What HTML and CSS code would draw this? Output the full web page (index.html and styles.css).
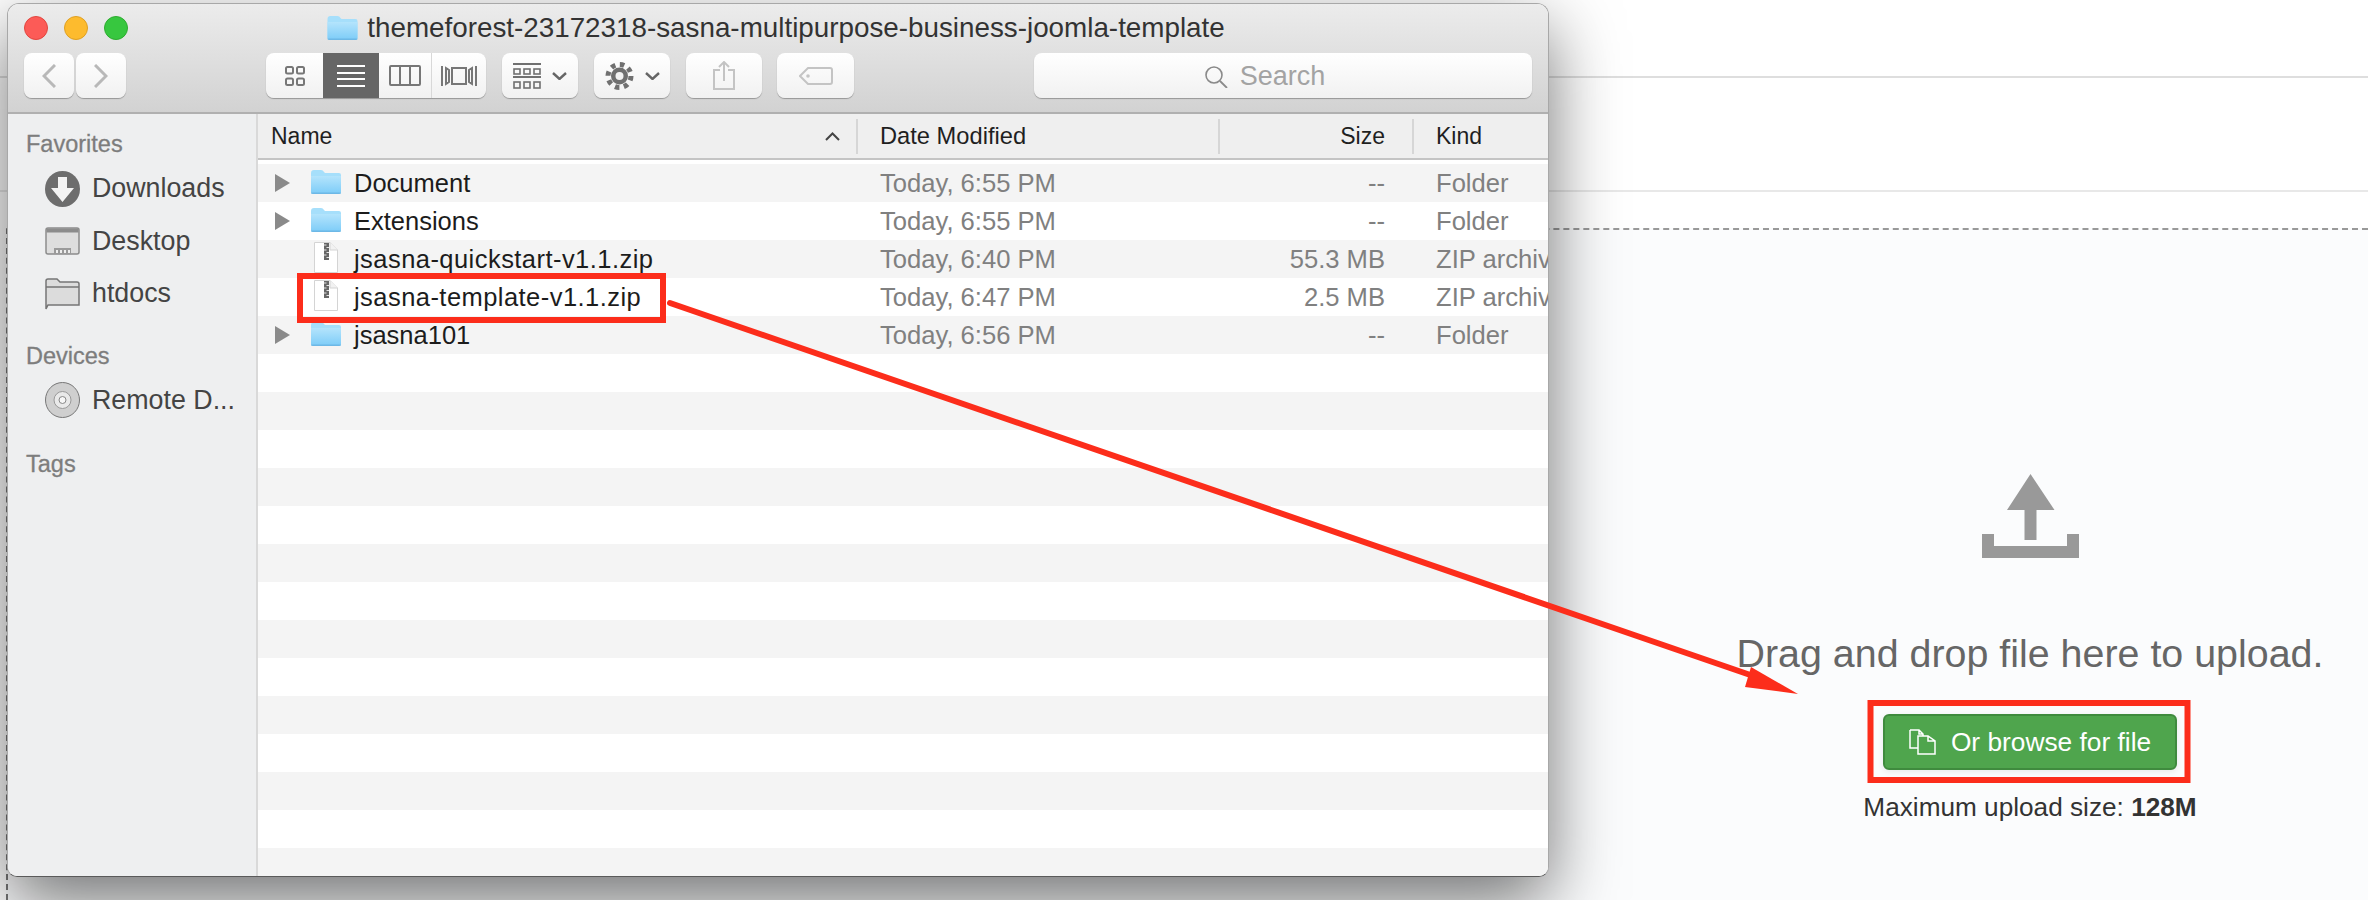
FILE: index.html
```html
<!DOCTYPE html>
<html lang="en">
<head>
<meta charset="utf-8">
<title>Upload</title>
<link rel="stylesheet" href="styles.css">
</head>
<body>
<svg class="defs" aria-hidden="true">
  <defs>
    <linearGradient id="fg" x1="0" y1="0" x2="0" y2="1"><stop offset="0" stop-color="#b4e4fc"/><stop offset="1" stop-color="#7fcdf8"/></linearGradient>
    <symbol id="folder" viewBox="0 0 30 24">
      <path d="M0 3Q0 0 3 0H10Q12 0 13 2L14 3H28Q30 3 30 5V22Q30 24 28 24H2Q0 24 0 22Z" fill="#a6dffb"/>
      <path d="M0 6H30V22Q30 23 28 23H2Q0 23 0 22Z" fill="url(#fg)"/>
      <path d="M0 22.6H30V23Q30 24 28 24H2Q0 24 0 23Z" fill="#6db8e6"/>
    </symbol>
    <symbol id="zip" viewBox="0 0 24 31">
      <path d="M.5 .5H16L23.5 8V30.5H.5Z" fill="#fff" stroke="#d4d4d4"/>
      <path d="M16 .5V8H23.5" fill="#f2f2f2" stroke="#d4d4d4"/>
      <rect x="10" y="1" width="5" height="17" fill="#666"/>
      <path d="M10 3H12.500M12.500 5.500H15M10 8H12.500M12.500 10.500H15M10 13H12.500M12.500 15.500H15" stroke="#e4e4e4"/>
    </symbol>
    <symbol id="tri" viewBox="0 0 15 18"><path d="M0 0L15 9L0 18Z" fill="#8a8a8a"/></symbol>
  </defs>
</svg>

<div class="page">
  <div class="bar bar-top"></div>
  <div class="bar bar-sub"></div>
  <div class="dropzone">
    <div class="upload">
      <svg class="upload-icon" viewBox="0 0 97 84" aria-hidden="true"><path d="M48.500 0L72.500 36H54.500V66H42.500V36H25Z M0 60H12V72H85V60H97V84H0Z" fill="#999"/></svg>
      <p class="upload-title">Drag and drop file here to upload.</p>
      <button class="browse">
        <svg class="browse-icon" viewBox="0 0 27 26" aria-hidden="true"><path d="M1 1H10L14 5V7M9 19H1V1M10 1V5H14" fill="none" stroke="#fff" stroke-width="1.500"/><path d="M9 7H19L26 12V25H9Z M19 7V12H26" fill="none" stroke="#fff" stroke-width="1.500"/></svg>
        Or browse for file
      </button>
      <p class="upload-note">Maximum upload size: <strong>128M</strong></p>
    </div>
  </div>
</div>

<div class="window">
  <header class="chrome">
    <div class="titlebar">
      <div class="lights"><span class="light red"></span><span class="light amber"></span><span class="light green"></span></div>
      <div class="title"><svg class="title-folder"><use href="#folder"/></svg>themeforest-23172318-sasna-multipurpose-business-joomla-template</div>
    </div>
    <div class="toolbar">
      <div class="nav">
        <div class="btn nav-btn"><svg width="14" height="24" viewBox="0 0 14 24"><path d="M13 1L2 12L13 23" class="ln-light"/></svg></div>
        <div class="btn nav-btn"><svg width="14" height="24" viewBox="0 0 14 24"><path d="M1 1L12 12L1 23" class="ln-light"/></svg></div>
      </div>
      <div class="btn views">
        <div class="seg seg-a"><svg width="20" height="20" viewBox="0 0 20 20"><g class="ln-thin"><rect x="1" y="1" width="7" height="6.500" rx="1.500"/><rect x="12" y="1" width="7" height="6.500" rx="1.500"/><rect x="1" y="12.500" width="7" height="6.500" rx="1.500"/><rect x="12" y="12.500" width="7" height="6.500" rx="1.500"/></g></svg></div>
        <div class="seg seg-b active"><svg width="28" height="22" viewBox="0 0 28 22"><path d="M0 1H28M0 8H28M0 14H28M0 21H28" stroke="#fff" stroke-width="2"/></svg></div>
        <div class="seg seg-c"><svg width="32" height="21" viewBox="0 0 32 21"><g class="ln-thin"><rect x="1" y="1" width="30" height="19" rx="1"/><path d="M11 1V20M21 1V20"/></g></svg></div>
        <div class="seg seg-d"><svg width="36" height="22" viewBox="0 0 36 22"><g class="ln-thin"><rect x="11" y="3" width="14" height="16"/><path d="M1 1V21M5 3L8 5V17L5 19ZM35 1V21M31 3L28 5V17L31 19Z"/></g></svg></div>
      </div>
      <div class="btn tool">
        <svg width="28" height="26" viewBox="0 0 28 26"><path d="M0 1H28M0 14H28" stroke="#707070" stroke-width="2"/><g class="ln-mid"><rect x="1" y="6" width="6" height="5"/><rect x="11" y="6" width="6" height="5"/><rect x="21" y="6" width="6" height="5"/><rect x="1" y="19" width="6" height="6"/><rect x="11" y="19" width="6" height="6"/><rect x="21" y="19" width="6" height="6"/></g></svg>
        <svg class="chev" width="15" height="8" viewBox="0 0 15 8"><path d="M1 1L7.500 7L14 1" class="ln-chev"/></svg>
      </div>
      <div class="btn tool">
        <svg width="29" height="28" viewBox="0 0 29 28"><circle cx="14.500" cy="14" r="8.500" fill="#707070"/><circle cx="14.500" cy="14" r="11.500" fill="none" stroke="#707070" stroke-width="5" stroke-dasharray="4.500 4.530"/><circle cx="14.500" cy="14" r="4" fill="#f3f3f3"/></svg>
        <svg class="chev" width="15" height="8" viewBox="0 0 15 8"><path d="M1 1L7.500 7L14 1" class="ln-chev"/></svg>
      </div>
      <div class="btn tool">
        <svg width="22" height="29" viewBox="0 0 22 29"><path d="M7 9H1V28H21V9H15M11 20V1M6 6L11 1L16 6" class="ln-pale"/></svg>
      </div>
      <div class="btn tool tool-tag">
        <svg width="34" height="18" viewBox="0 0 34 18"><path d="M9 1H31Q33 1 33 3V15Q33 17 31 17H9L1 9Z" class="ln-pale"/><circle cx="9" cy="9" r="1.800" fill="#c4c4c4"/></svg>
      </div>
      <div class="btn search">
        <svg width="23" height="22" viewBox="0 0 23 22"><circle cx="9" cy="9" r="8" fill="none" stroke="#8a8a8a" stroke-width="1.600"/><path d="M15 15L22 22" stroke="#8a8a8a" stroke-width="1.800"/></svg>
        <span>Search</span>
      </div>
    </div>
  </header>

  <div class="finder">
    <aside class="sidebar">
      <h3 class="side-label">Favorites</h3>
      <div class="side-item"><svg class="side-icon" viewBox="0 0 35 36"><ellipse cx="17.500" cy="18" rx="17.500" ry="18" fill="#6d6d6d"/><path d="M13 6H22V17H29L17.500 31L6 17H13Z" fill="#f3f3f3"/></svg>Downloads</div>
      <div class="side-item"><svg class="side-icon" viewBox="0 0 35 28"><rect x="1" y="1" width="33" height="26" rx="2" fill="#dedede" stroke="#8c8c8c" stroke-width="1.500"/><rect x="1.500" y="1.500" width="32" height="4" fill="#8c8c8c"/><path d="M9 21H26V27H9Z" fill="#9a9a9a"/><path d="M12 23V26M16 23V26M20 23V26M24 23V26" stroke="#eee" stroke-width="2"/></svg>Desktop</div>
      <div class="side-item"><svg class="side-icon" viewBox="0 0 35 32"><path d="M1 27V3Q1 1 3 1H12L15 4H32Q34 4 34 6V27H3L1 31Z" fill="#dcdcdc" stroke="#757575" stroke-width="1.500"/><path d="M1 9H34" stroke="#757575" stroke-width="1.500"/></svg>htdocs</div>
      <h3 class="side-label side-gap">Devices</h3>
      <div class="side-item"><svg class="side-icon" viewBox="0 0 35 36"><ellipse cx="17.500" cy="18" rx="17" ry="17.500" fill="#cfcfcf" stroke="#777" stroke-width="1"/><circle cx="17.500" cy="18" r="8.500" fill="#e9e9e9" stroke="#999"/><circle cx="17.500" cy="18" r="3.500" fill="#f7f7f7" stroke="#888"/></svg>Remote D...</div>
      <h3 class="side-label side-gap-b">Tags</h3>
    </aside>

    <main class="list">
      <div class="row head">
        <div class="cell name-head"><span>Name</span><svg width="15" height="9" viewBox="0 0 15 9"><path d="M1 8L7.500 1.500L14 8" fill="none" stroke="#444" stroke-width="2"/></svg></div>
        <div class="cell date">Date Modified</div>
        <div class="cell size">Size</div>
        <div class="cell kind">Kind</div>
      </div>
      <div class="rows">
        <div class="row item"><div class="cell name"><svg class="tri"><use href="#tri"/></svg><svg class="ficon"><use href="#folder"/></svg><span>Document</span></div><div class="cell date">Today, 6:55 PM</div><div class="cell size">--</div><div class="cell kind">Folder</div></div>
        <div class="row item"><div class="cell name"><svg class="tri"><use href="#tri"/></svg><svg class="ficon"><use href="#folder"/></svg><span>Extensions</span></div><div class="cell date">Today, 6:55 PM</div><div class="cell size">--</div><div class="cell kind">Folder</div></div>
        <div class="row item"><div class="cell name"><svg class="zicon"><use href="#zip"/></svg><span class="zip-name">jsasna-quickstart-v1.1.zip</span></div><div class="cell date">Today, 6:40 PM</div><div class="cell size">55.3 MB</div><div class="cell kind">ZIP archive</div></div>
        <div class="row item"><div class="cell name"><svg class="zicon"><use href="#zip"/></svg><span class="zip-name">jsasna-template-v1.1.zip</span></div><div class="cell date">Today, 6:47 PM</div><div class="cell size">2.5 MB</div><div class="cell kind">ZIP archive</div></div>
        <div class="row item"><div class="cell name"><svg class="tri"><use href="#tri"/></svg><svg class="ficon"><use href="#folder"/></svg><span>jsasna101</span></div><div class="cell date">Today, 6:56 PM</div><div class="cell size">--</div><div class="cell kind">Folder</div></div>
      </div>
    </main>
  </div>
</div>

<svg class="marks" viewBox="0 0 2368 900" aria-hidden="true">
  <rect x="300" y="276" width="363" height="44" class="mark-box"/>
  <rect x="1870.500" y="703" width="317" height="77" class="mark-box"/>
  <path d="M670 303L1762 679" class="mark-line"/>
  <path d="M1798 694L1751 667L1745 687Z" fill="#fc2d1b"/>
</svg>
</body>
</html>
```

FILE: styles.css
```css
* { box-sizing: border-box; }
html, body { margin: 0; height: 100%; }
body {
  width: 2368px;
  height: 900px;
  overflow: hidden;
  background: #fff;
  font-family: "Liberation Sans", Arial, sans-serif;
  position: relative;
}
.defs { position: absolute; width: 0; height: 0; }

/* Background page */
.page { display: flex; flex-direction: column; height: 900px; }
.bar { flex: none; border-bottom: 2px solid #dedede; }
.bar-top { height: 78px; }
.bar-sub { height: 114px; border-bottom-color: #e8e8e8; margin-bottom: 36px; }
.dropzone {
  flex: 1;
  margin-left: 6px;
  border-top: 2px dashed #999;
  border-left: 2px dashed #777;
  background: #fbfcfd;
  display: flex;
  justify-content: flex-end;
  overflow: hidden;
}
.upload {
  width: 660px;
  margin-right: 8px;
  padding-top: 244px;
  display: flex;
  flex-direction: column;
  align-items: center;
}
.upload-icon { width: 97px; height: 84px; flex: none; }
.upload-title {
  margin: 71px 0 0;
  font-size: 39.400px;
  line-height: 48px;
  color: #666;
  white-space: nowrap;
}
.browse {
  margin-top: 37px;
  width: 294px;
  height: 56px;
  flex: none;
  border: 2px solid #3f8b3e;
  border-radius: 6px;
  background: #4fa54d;
  color: #fff;
  font: 26.300px "Liberation Sans", Arial, sans-serif;
  display: flex;
  align-items: center;
  justify-content: center;
  gap: 15px;
  padding: 0;
  box-shadow: 0 2px 6px rgba(0, 0, 0, .08);
}
.browse-icon { width: 27px; height: 26px; }
.upload-note {
  margin: 22px 0 0;
  font-size: 26.200px;
  line-height: 30px;
  color: #333;
  white-space: nowrap;
}

/* Finder window */
.window {
  position: absolute;
  left: 7px;
  top: 3px;
  width: 1542px;
  height: 874px;
  border: 1px solid #a8a8a8;
  border-bottom-color: #5a5a5a;
  border-radius: 12px 12px 10px 10px;
  overflow: hidden;
  display: flex;
  flex-direction: column;
  background: #fff;
  box-shadow: 0 25px 70px rgba(0, 0, 0, .55);
}
.chrome {
  flex: none;
  height: 110px;
  background: linear-gradient(#ececec, #d2d2d2);
  border-bottom: 2px solid #b0b0b0;
  display: flex;
  flex-direction: column;
}
.titlebar {
  height: 49px;
  flex: none;
  display: grid;
  grid-template-columns: 1fr auto 1fr;
  align-items: center;
  padding: 0 20px 2px 16px;
}
.lights { display: flex; gap: 16px; }
.light { width: 24px; height: 24px; border-radius: 50%; }
.red { background: #fc5b57; border: 1px solid #e2463f; }
.amber { background: #fdbb2e; border: 1px solid #dfa023; }
.green { background: #37c73f; border: 1px solid #2dac2f; }
.title {
  display: flex;
  align-items: center;
  gap: 9px;
  font-size: 27.800px;
  color: #333;
  white-space: nowrap;
}
.title-folder { width: 31px; height: 24px; }

.toolbar { display: flex; align-items: flex-start; padding: 0 16px; }
.btn {
  height: 45px;
  flex: none;
  display: flex;
  align-items: center;
  justify-content: center;
  background: linear-gradient(#fff, #f1f1f1);
  border-radius: 8px;
  box-shadow: 0 1px 1px rgba(0, 0, 0, .3);
}
.nav { display: flex; gap: 2px; margin-right: 140px; }
.nav-btn { width: 50px; }
.views { width: 220px; margin-right: 16px; overflow: hidden; }
.seg {
  height: 100%;
  display: flex;
  align-items: center;
  justify-content: center;
  flex: none;
}
.seg-a { width: 57px; }
.seg-b { width: 56px; }
.seg-c { width: 53px; border-right: 1px solid #d8d8d8; }
.seg-d { width: 54px; }
.active { background: #666; }
.tool { width: 76px; margin-right: 16px; gap: 11px; }
.tool-tag { width: 77px; margin-right: 0; margin-left: -1px; }
.search {
  width: 498px;
  margin-left: auto;
  padding: 2px 36px 0 0;
  gap: 12px;
  font-size: 27px;
  color: #a3a3a3;
}
.ln-light { fill: none; stroke: #b8b8b8; stroke-width: 3; }
.ln-thin { fill: none; stroke: #777; stroke-width: 2; }
.ln-mid { fill: none; stroke: #707070; stroke-width: 1.6; }
.ln-chev { fill: none; stroke: #666; stroke-width: 2.400; }
.ln-pale { fill: none; stroke: #c4c4c4; stroke-width: 2; }

/* Finder body */
.finder { flex: 1; min-height: 0; display: flex; }
.sidebar {
  flex: none;
  width: 250px;
  background: #eeeff0;
  border-right: 2px solid #d9d9d9;
  padding-top: 12px;
}
.side-label {
  margin: 0;
  padding-left: 18px;
  font-size: 23.500px;
  line-height: 36px;
  font-weight: normal;
  color: #7d7d7d;
  -webkit-text-stroke: .3px #7d7d7d;
}
.side-gap { margin-top: 18px; }
.side-gap-b { margin-top: 20px; }
.side-item {
  height: 52.500px;
  padding: 1px 0 0 37px;
  display: flex;
  align-items: center;
  gap: 12px;
  font-size: 26.800px;
  color: #444;
  white-space: nowrap;
}
.side-icon { width: 35px; height: 36px; flex: none; }

.list { flex: 1; min-width: 0; display: flex; flex-direction: column; overflow: hidden; }
.row { display: grid; grid-template-columns: 600px 362px 194px 1fr; align-items: center; }
.head {
  height: 46px;
  flex: none;
  background: #efefef;
  border-bottom: 2px solid #c4c4c4;
  font-size: 23px;
  color: #1f1f1f;
  margin-bottom: 4px;
}
.head .cell { height: 35px; display: flex; align-items: center; border-right: 2px solid #d6d6d6; }
.head .cell:last-child { border-right: 0; }
.head .date { font-size: 23.700px; }
.head .size { justify-content: flex-end; padding-right: 27px; }
.name-head { justify-content: space-between; padding: 0 16px 0 13px; }
.rows {
  flex: 1;
  min-height: 0;
  background: repeating-linear-gradient(#f4f4f4 0 38px, #fff 38px 76px);
}
.item { height: 38px; font-size: 25.600px; color: #808080; }
.item .cell { padding-top: 1px; }
.cell { white-space: nowrap; overflow: hidden; }
.date { padding-left: 22px; }
.size { text-align: right; padding-right: 29px; }
.kind { padding-left: 22px; }
.item .name {
  position: relative;
  display: flex;
  align-items: center;
  height: 38px;
  padding: 1px 0 0 96px;
  color: #1c1c1c;
  font-size: 25.500px;
}
.zip-name { letter-spacing: .45px; }
.tri { position: absolute; left: 17px; top: 10px; width: 15px; height: 18px; }
.ficon { position: absolute; left: 53px; top: 6px; width: 30px; height: 24px; }
.zicon { position: absolute; left: 56px; top: 2px; width: 24px; height: 31px; }

/* Annotations drawn over the screenshot */
.marks { position: absolute; left: 0; top: 0; width: 2368px; height: 900px; pointer-events: none; }
.mark-box { fill: none; stroke: #fc2d1b; stroke-width: 6; }
.mark-line { fill: none; stroke: #fc2d1b; stroke-width: 6; stroke-linecap: round; }
```
